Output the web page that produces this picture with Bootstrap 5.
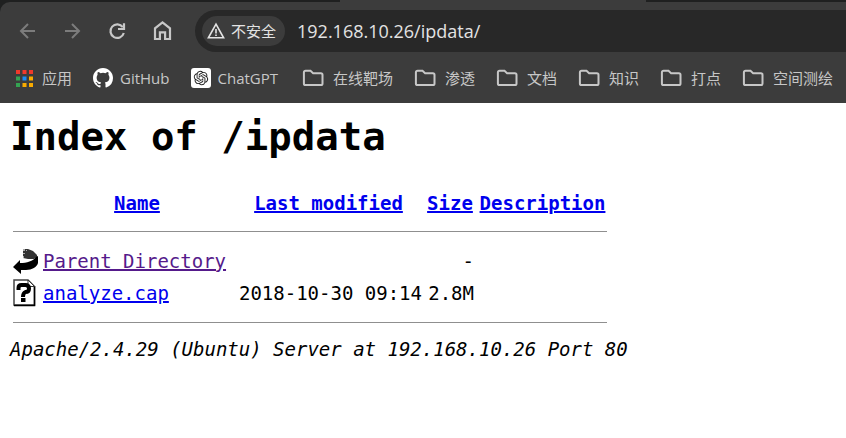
<!DOCTYPE html>
<html lang="zh-CN">
<head>
<meta charset="utf-8">
<meta name="viewport" content="width=device-width, initial-scale=1">
<title>Index of /ipdata</title>
<link rel="stylesheet" href="https://cdn.jsdelivr.net/npm/bootstrap@5.3.0/dist/css/bootstrap.min.css">
<style>
  body { background: #fff; color: #000; font-family: "Open Sans", "Noto Sans CJK SC", sans-serif; overflow-x: hidden; }
  .browser { background: #1f2020; color: #c7c7c7; }
  .tab-strip { height: 2px; }
  .tab-left { flex: 0 0 340px; }
  .tab-active { flex: 0 0 306px; background: #3c3c3c; }
  .chrome-bars { background: #3c3c3c; border-top-left-radius: 10px; padding-top: 8px; }
  .tool-row { height: 42px; padding-left: 15px; }
  .tool-row .nav-btn { width: 24px; height: 24px; color: #c7c7c7; line-height: 1; }
  .tool-row .nav-btn:disabled { color: #7c7c7c; opacity: 1; border: 0; }
  .nav-group { gap: 21px; margin-right: 21px; }
  .address { background: #282828; height: 42px; border-radius: 21px 0 0 21px; padding-left: 7px; min-width: 0; }
  .chip { background: #3c3c3c; color: #e3e3e3; height: 30px; border-radius: 15px; font-size: 15px; padding: 0 9px 0 5px; gap: 6px; }
  .address input { color: #e3e3e3; font-size: 18px; margin-left: 12px; min-width: 0; outline: 0; }
  .bookmarks { height: 51px; padding: 1px 0 0 16px; font-size: 15px; gap: 24px; overflow: hidden; }
  .bookmark-sites { gap: 21px; }
  .bookmark-folders { gap: 21px; }
  .bookmarks a { color: #c7c7c7; gap: 9px; }
  .bookmarks a.site { gap: 7px; }
  .bookmarks svg { flex: none; }
  .listing { font-family: "DejaVu Sans Mono", monospace; font-size: 19px; line-height: 24px; padding: 11px 10px; }
  .listing h1 { font-size: 39px; line-height: 46px; font-weight: 700; margin-bottom: 31px; }
  .listing table { table-layout: fixed; width: 600px; border-collapse: separate; border-spacing: 2px 0; margin: 0; }
  .listing th, .listing td { padding: 0 1px; white-space: nowrap; height: 32px; vertical-align: middle; }
  .listing th { text-align: center; height: 24px; }
  .listing th a, .listing td a { color: #0000ee; text-decoration: underline; text-decoration-thickness: 2px; }
  .listing td a.seen { color: #551a8b; }
  .listing .rule { height: auto; }
  .listing hr { margin: 16px 0 13px; border-top: 1px solid #8f8f8f; opacity: 1; }
  .listing .last hr { margin: 13px 0 14px; }
  .c-icon { width: 28px; }
  .c-name { width: 190px; }
  .c-date { width: 189px; }
  .c-size { width: 50px; }
  .listing td svg { display: block; }
</style>
<script src="https://cdn.jsdelivr.net/npm/bootstrap@5.3.0/dist/js/bootstrap.bundle.min.js"></script>
</head>
<body>
<svg class="d-none" aria-hidden="true">
  <symbol id="folder" viewBox="0 0 22 18"><path d="M3.500 1.800h5l2.600 2.400h7.800a1.600 1.600 0 0 1 1.600 1.600v8.600a1.600 1.600 0 0 1-1.600 1.600H3.500a1.600 1.600 0 0 1-1.600-1.600V3.400a1.600 1.600 0 0 1 1.600-1.600z" fill="none" stroke="currentColor" stroke-width="2"/></symbol>
</svg>

<header class="browser">
  <div class="tab-strip d-flex"><div class="tab-left"></div><div class="tab-active"></div></div>
  <div class="chrome-bars">
    <div class="tool-row d-flex align-items-center">
      <div class="nav-group d-flex">
        <button class="nav-btn btn p-0 border-0" type="button" disabled aria-label="Back"><svg width="24" height="24" viewBox="0 0 24 24" fill="none" stroke="currentColor" stroke-width="2"><path d="M20 12H6M13 5l-7 7 7 7"/></svg></button>
        <button class="nav-btn btn p-0 border-0" type="button" disabled aria-label="Forward"><svg width="24" height="24" viewBox="0 0 24 24" fill="none" stroke="currentColor" stroke-width="2"><path d="M5 12h14M12 5l7 7-7 7"/></svg></button>
        <button class="nav-btn btn p-0 border-0" type="button" aria-label="Reload"><svg width="24" height="24" viewBox="0 0 24 24" fill="none" stroke="currentColor" stroke-width="2.200"><path d="M17.800 8.200A6.800 6.800 0 1 0 18.800 14M19 4.300v5.700h-6"/></svg></button>
        <button class="nav-btn btn p-0 border-0" type="button" aria-label="Home"><svg width="24" height="24" viewBox="0 0 24 24" fill="none" stroke="currentColor" stroke-width="2.200"><path d="M5 20V9.300l7.500-6 7.500 6V20h-4.900v-6.700H9.900V20z"/></svg></button>
      </div>
      <div class="address d-flex align-items-center flex-grow-1">
        <button class="chip btn border-0 d-flex align-items-center flex-shrink-0" type="button"><svg width="18" height="18" viewBox="0 0 18 18" fill="none" stroke="currentColor" stroke-width="1.600"><path d="M9 2.200 16.600 15.800H1.400z"/><path d="M9 7v4.500M9 12.500v1.600"/></svg>不安全</button>
        <input class="bg-transparent border-0 p-0 flex-grow-1" type="text" value="192.168.10.26/ipdata/" aria-label="Address">
      </div>
    </div>
    <nav class="bookmarks d-flex align-items-center text-nowrap" aria-label="Bookmarks">
      <div class="bookmark-sites d-flex align-items-center">
        <a class="d-flex align-items-center text-decoration-none" href="#"><svg width="17" height="17" viewBox="0 0 17 17"><path fill="#f0392b" d="M0 0h4v4H0zM6.500 0h4v4h-4zM13 0h4v4h-4z"/><path fill="#34a352" d="M0 6.500h4v4H0zM0 13h4v4H0z"/><path fill="#1a8cf5" d="M6.500 6.500h4v4h-4z"/><path fill="#f9ab00" d="M13 6.500h4v4h-4zM6.500 13h4v4h-4zM13 13h4v4h-4z"/></svg>应用</a>
        <a class="site d-flex align-items-center text-decoration-none" href="#"><svg width="20" height="20" viewBox="0 0 16 16" fill="#fff"><path d="M8 0C3.580 0 0 3.580 0 8c0 3.540 2.290 6.530 5.470 7.590.4.070.55-.17.55-.38 0-.19-.01-.82-.01-1.490-2.010.37-2.530-.49-2.690-.94-.09-.23-.48-.94-.82-1.130-.28-.15-.68-.52-.01-.53.63-.01 1.080.58 1.230.82.72 1.210 1.870.87 2.330.66.07-.52.28-.87.51-1.070-1.780-.2-3.640-.89-3.640-3.950 0-.87.31-1.590.82-2.150-.08-.2-.36-1.020.08-2.120 0 0 .67-.21 2.200.82a7.500 7.500 0 0 1 4 0c1.530-1.040 2.200-.82 2.200-.82.44 1.100.16 1.920.08 2.120.51.56.82 1.270.82 2.150 0 3.070-1.870 3.750-3.650 3.950.29.25.54.73.54 1.480 0 1.070-.01 1.930-.01 2.200 0 .21.15.46.55.38A8.010 8.010 0 0 0 16 8c0-4.420-3.580-8-8-8z"/></svg>GitHub</a>
        <a class="site d-flex align-items-center text-decoration-none" href="#"><svg width="20" height="20" viewBox="0 0 20 20"><rect width="20" height="20" rx="3" fill="#fff"/><g transform="translate(2.800 2.800) scale(.6)"><path fill="#222" d="M22.282 9.821a5.985 5.985 0 0 0-.516-4.910 6.046 6.046 0 0 0-6.510-2.900A6.065 6.065 0 0 0 4.981 4.182a5.985 5.985 0 0 0-3.998 2.900 6.046 6.046 0 0 0 .743 7.097 5.980 5.980 0 0 0 .511 4.911 6.051 6.051 0 0 0 6.515 2.900A5.985 5.985 0 0 0 13.260 24a6.056 6.056 0 0 0 5.772-4.206 5.990 5.990 0 0 0 3.998-2.900 6.056 6.056 0 0 0-.748-7.073zM13.260 22.430a4.476 4.476 0 0 1-2.876-1.041l.141-.080 4.779-2.758a.795.795 0 0 0 .392-.681v-6.737l2.020 1.169a.071.071 0 0 1 .038.052v5.583a4.504 4.504 0 0 1-4.494 4.493zM3.600 18.304a4.471 4.471 0 0 1-.535-3.014l.142.085 4.783 2.759a.771.771 0 0 0 .780 0l5.843-3.369v2.332a.080.080 0 0 1-.033.062L9.740 19.950a4.500 4.500 0 0 1-6.140-1.646zM2.341 7.896a4.485 4.485 0 0 1 2.365-1.973V11.600a.766.766 0 0 0 .388.676l5.815 3.355-2.020 1.168a.076.076 0 0 1-.071 0l-4.830-2.786A4.504 4.504 0 0 1 2.341 7.872zm16.597 3.855-5.834-3.387 2.015-1.164a.076.076 0 0 1 .071 0l4.830 2.791a4.494 4.494 0 0 1-.676 8.105v-5.678a.790.790 0 0 0-.406-.667zm2.010-3.023-.141-.085-4.774-2.782a.776.776 0 0 0-.785 0L9.409 9.230V6.897a.066.066 0 0 1 .028-.061l4.830-2.787a4.500 4.500 0 0 1 6.681 4.660zM8.306 12.863l-2.020-1.164a.080.080 0 0 1-.038-.057V6.075a4.500 4.500 0 0 1 7.376-3.454l-.142.081-4.778 2.758a.795.795 0 0 0-.393.682zm1.098-2.366 2.602-1.500 2.607 1.500v3l-2.597 1.500-2.607-1.500z"/></g></svg>ChatGPT</a>
      </div>
      <div class="bookmark-folders d-flex align-items-center">
        <a class="d-flex align-items-center text-decoration-none" href="#"><svg width="22" height="18"><use href="#folder"/></svg>在线靶场</a>
        <a class="d-flex align-items-center text-decoration-none" href="#"><svg width="22" height="18"><use href="#folder"/></svg>渗透</a>
        <a class="d-flex align-items-center text-decoration-none" href="#"><svg width="22" height="18"><use href="#folder"/></svg>文档</a>
        <a class="d-flex align-items-center text-decoration-none" href="#"><svg width="22" height="18"><use href="#folder"/></svg>知识</a>
        <a class="d-flex align-items-center text-decoration-none" href="#"><svg width="22" height="18"><use href="#folder"/></svg>打点</a>
        <a class="d-flex align-items-center text-decoration-none" href="#"><svg width="22" height="18"><use href="#folder"/></svg>空间测绘</a>
      </div>
    </nav>
  </div>
</header>

<main class="listing">
  <h1>Index of /ipdata</h1>
  <table>
    <colgroup><col class="c-icon"><col class="c-name"><col class="c-date"><col class="c-size"><col></colgroup>
    <thead>
      <tr><th></th><th><a href="#">Name</a></th><th><a href="#">Last modified</a></th><th><a href="#">Size</a></th><th><a href="#">Description</a></th></tr>
    </thead>
    <tbody>
      <tr><td class="rule" colspan="5"><hr></td></tr>
      <tr>
        <td><svg width="26" height="28" viewBox="0 0 26 28" role="img" aria-label="Back"><path fill="#333" d="M10 2h5l5 2 4 4v2l-3 2h-6l-5-1z"/><path fill="#aaa" d="M10 2h2v2h-2zM10 6h2v1h-2zM10 9h1v2h-1zM13 3h1v1h-1z"/><path fill="#000" d="M25 9v7c-1 4-6 7-12 7H8v4l-8-7 7-7v3c7 0 13-2 16-6z"/></svg></td>
        <td><a class="seen" href="#">Parent Directory</a></td><td></td><td class="text-end">-</td><td></td>
      </tr>
      <tr>
        <td><svg width="23" height="28" viewBox="0 0 23 28" role="img" aria-label="File"><path fill="#fff" stroke="#444" stroke-width="1.500" d="M1 1h14l6.500 6.500V26H1z"/><path fill="none" stroke="#000" stroke-width="1.500" d="M21.500 7v19.500H1"/><path fill="#fff" stroke="#333" d="M15 1v6.500h6.500z"/><path fill="none" stroke="#000" stroke-width="4" d="M5.500 11V9q0-3 3-3h4q3.500 0 3.500 3.500T12.500 13q-2.500 1-2.500 5"/><path d="M8 19h4.500v4H8z"/></svg></td>
        <td><a href="#">analyze.cap</a></td><td class="text-end">2018-10-30 09:14</td><td class="text-end">2.8M</td><td></td>
      </tr>
      <tr class="last"><td class="rule" colspan="5"><hr></td></tr>
    </tbody>
  </table>
  <address class="mb-0 fst-italic">Apache/2.4.29 (Ubuntu) Server at 192.168.10.26 Port 80</address>
</main>
</body>
</html>
